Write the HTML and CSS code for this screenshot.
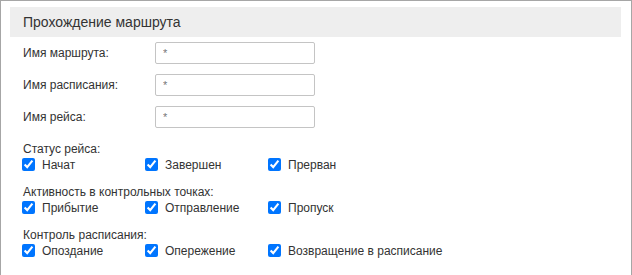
FILE: index.html
```html
<!DOCTYPE html>
<html lang="ru">
<head>
<meta charset="utf-8">
<link rel="stylesheet" href="styles.css">
</head>
<body>
<div class="panel">
  <div class="panel-header">Прохождение маршрута</div>
  <div class="fields">
    <div class="field"><label class="field-label">Имя маршрута:</label><input class="field-input" type="text" value="*"></div>
    <div class="field"><label class="field-label">Имя расписания:</label><input class="field-input" type="text" value="*"></div>
    <div class="field"><label class="field-label">Имя рейса:</label><input class="field-input" type="text" value="*"></div>
  </div>
  <div class="group">
    <div class="group-title">Статус рейса:</div>
    <div class="options">
      <label class="option"><input type="checkbox" checked><span>Начат</span></label>
      <label class="option"><input type="checkbox" checked><span>Завершен</span></label>
      <label class="option"><input type="checkbox" checked><span>Прерван</span></label>
    </div>
  </div>
  <div class="group">
    <div class="group-title">Активность в контрольных точках:</div>
    <div class="options">
      <label class="option"><input type="checkbox" checked><span>Прибытие</span></label>
      <label class="option"><input type="checkbox" checked><span>Отправление</span></label>
      <label class="option"><input type="checkbox" checked><span>Пропуск</span></label>
    </div>
  </div>
  <div class="group">
    <div class="group-title">Контроль расписания:</div>
    <div class="options">
      <label class="option"><input type="checkbox" checked><span>Опоздание</span></label>
      <label class="option"><input type="checkbox" checked><span>Опережение</span></label>
      <label class="option"><input type="checkbox" checked><span>Возвращение в расписание</span></label>
    </div>
  </div>
</div>
</body>
</html>
```

FILE: styles.css
```css
html, body {
  margin: 0;
  padding: 0;
  background: #fff;
}
body {
  font-family: "Liberation Sans", Arial, sans-serif;
  font-size: 12px;
  color: #333;
}
.panel {
  border: 1px solid #a6a6a6;
  border-bottom: none;
  padding: 6px 10px 20px 9px;
  min-height: 260px;
}
.panel-header {
  height: 30px;
  line-height: 30px;
  background: #eeeeee;
  padding-left: 13px;
  font-size: 14px;
  color: #333;
}
.fields {
  display: flex;
  flex-direction: column;
  gap: 10px;
  padding-top: 5px;
}
.field {
  display: flex;
  align-items: center;
  height: 22px;
}
.field-label {
  width: 132px;
  padding-left: 13px;
  flex: none;
}
.field-input {
  box-sizing: border-box;
  width: 160px;
  height: 22px;
  margin: 0;
  border: 1px solid #c4c4c4;
  border-radius: 2px;
  padding: 0 7px;
  font-family: "Liberation Sans", Arial, sans-serif;
  font-size: 11px;
  color: #777;
  outline: none;
}
.group {
  margin-top: 14px;
}
.group + .group {
  margin-top: 12px;
}
.group-title {
  padding-left: 13px;
  line-height: 14px;
  height: 14px;
}
.options {
  display: flex;
  padding-left: 8px;
  height: 17px;
}
.option {
  display: flex;
  align-items: center;
  width: 123px;
  flex: none;
  white-space: nowrap;
}
.option input {
  margin: 2px 3px 2px 4px;
}
.option span {
  margin-left: 4px;
}
```
